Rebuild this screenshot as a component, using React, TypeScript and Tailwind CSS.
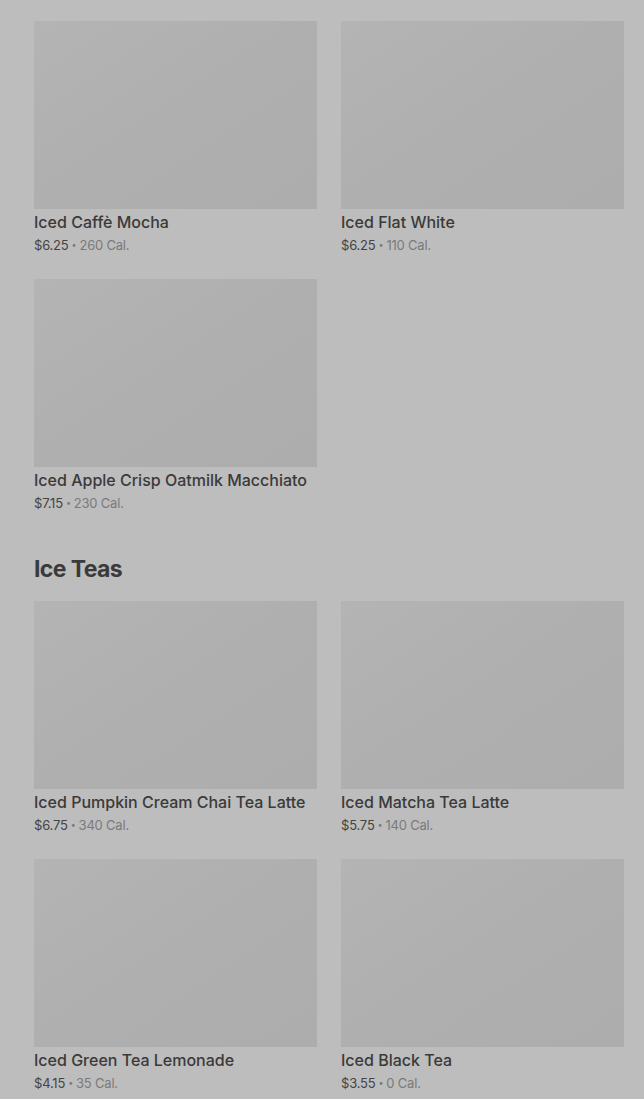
import React from 'react';

type Item = { name: string; price: string; cal: string };

const coffees: Item[] = [
  { name: 'Iced Caffè Mocha', price: '$6.25', cal: '260 Cal.' },
  { name: 'Iced Flat White', price: '$6.25', cal: '110 Cal.' },
  { name: 'Iced Apple Crisp Oatmilk Macchiato', price: '$7.15', cal: '230 Cal.' },
];

const teas: Item[] = [
  { name: 'Iced Pumpkin Cream Chai Tea Latte', price: '$6.75', cal: '340 Cal.' },
  { name: 'Iced Matcha Tea Latte', price: '$5.75', cal: '140 Cal.' },
  { name: 'Iced Green Tea Lemonade', price: '$4.15', cal: '35 Cal.' },
  { name: 'Iced Black Tea', price: '$3.55', cal: '0 Cal.' },
];

const MenuCard: React.FC<{ item: Item }> = ({ item }) => (
  <div className="flex flex-col">
    <div className="h-[188px] w-full bg-gradient-to-br from-[#b4b4b4] via-[#afafaf] to-[#adadad]" />
    <div className="mt-px text-[16px] leading-6 font-medium text-[#3a3a3a]">{item.name}</div>
    <div className="mt-px flex items-center text-[13px] leading-5 text-[#7a7a7a] tracking-[-0.2px]">
      <span className="text-[#444]">{item.price}</span>
      <span className="mx-[3px] text-[9px]">•</span>
      <span>{item.cal}</span>
    </div>
  </div>
);

export default function App() {
  return (
    <div
      className="min-h-[1099px] bg-[#bdbdbd] pl-[34px] pr-[20px] pt-[21px] pb-10"
      style={{ fontFamily: 'Inter, "Noto Sans", sans-serif' }}
    >
      <div className="grid grid-cols-2 gap-x-6 gap-y-6">
        {coffees.map((it) => (
          <MenuCard key={it.name} item={it} />
        ))}
      </div>
      <h2 className="mt-[40px] mb-[16px] text-[23px] leading-8 font-bold text-[#3a3a3a] tracking-[-0.6px]">Ice Teas</h2>
      <div className="grid grid-cols-2 gap-x-6 gap-y-6">
        {teas.map((it) => (
          <MenuCard key={it.name} item={it} />
        ))}
      </div>
    </div>
  );
}
